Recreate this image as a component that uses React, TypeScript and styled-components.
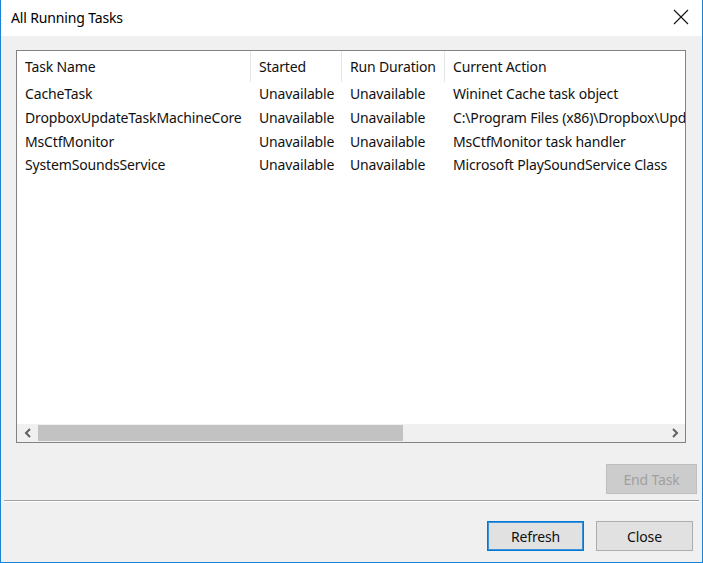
import styled, { createGlobalStyle } from "styled-components";

const Global = createGlobalStyle`
  html, body { margin: 0; padding: 0; background: #ffffff; }
  * { box-sizing: border-box; }
`

const Window = styled.div`
  width: 703px;
  height: 563px;
  display: flex;
  flex-direction: column;
  border: 1px solid #1883d7;
  border-top: none;
  font-family: "Segoe UI", "Noto Sans", sans-serif;
  font-size: 14px;
  letter-spacing: -0.15px;
  color: #111;
  background: #f0f0f0;
`
const TitleBar = styled.div`
  height: 36px;
  flex: none;
  display: flex;
  align-items: center;
  justify-content: space-between;
  background: #ffffff;
  padding: 0 13px 2px 10px;
  color: #000;
`
const CloseX = styled.div`
  width: 16px;
  height: 16px;
  display: flex;
`
const Body = styled.div`
  flex: 1;
  display: flex;
  flex-direction: column;
  padding: 14px 0 10px 15px;
`
const ListBox = styled.div`
  width: 670px;
  height: 393px;
  display: flex;
  flex-direction: column;
  border: 1px solid #828282;
  background: #ffffff;
  overflow: hidden;
`
const ListArea = styled.div`
  flex: 1;
  overflow: hidden;
`
const Grid = styled.div`
  display: grid;
  grid-template-columns: 234px 91px 103px 320px;
  width: 748px;
`
const HeadCell = styled.div<{ last?: boolean }>`
  height: 31px;
  display: flex;
  align-items: center;
  padding-left: 8px;
  border-right: ${p => (p.last ? "none" : "1px solid #e5e5e5")};
  white-space: nowrap;
`
const Cell = styled.div`
  height: 23.7px;
  display: flex;
  align-items: center;
  padding-left: 8px;
  white-space: nowrap;
  overflow: hidden;
`
const HScroll = styled.div`
  height: 18px;
  flex: none;
  display: flex;
  align-items: stretch;
  background: #f0f0f0;
`
const Arrow = styled.div`
  width: 21px;
  display: flex;
  align-items: center;
  justify-content: center;
`
const Track = styled.div`
  flex: 1;
  display: flex;
  align-items: stretch;
  padding: 1px 0;
`
const Thumb = styled.div`
  background: #c2c2c2;
`
const ActionRow = styled.div`
  display: flex;
  justify-content: flex-end;
  padding: 21px 5px 0 0;
`
const Separator = styled.div`
  height: 2px;
  margin: 6px 3px 0 -12px;
  border-top: 1px solid #a0a0a0;
  border-bottom: 1px solid #ffffff;
`
const ButtonRow = styled.div`
  display: flex;
  justify-content: flex-end;
  gap: 12px;
  padding: 19px 9px 0 0;
`
const Button = styled.div<{ variant?: "default" | "disabled" }>`
  width: ${p => (p.variant === "disabled" ? "91px" : "97px")};
  height: 30px;
  display: flex;
  align-items: center;
  justify-content: center;
  background: ${p => (p.variant === "disabled" ? "#cccccc" : "#e1e1e1")};
  border: 1px solid
    ${p =>
      p.variant === "default" ? "#0078d7" : p.variant === "disabled" ? "#bfbfbf" : "#adadad"};
  box-shadow: ${p => (p.variant === "default" ? "inset 0 0 0 1px #3c92dc" : "none")};
  color: ${p => (p.variant === "disabled" ? "#a0a0a0" : "#111")};
`

const columns = ["Task Name", "Started", "Run Duration", "Current Action"];

const tasks = [
  ["CacheTask", "Unavailable", "Unavailable", "Wininet Cache task object"],
  ["DropboxUpdateTaskMachineCore", "Unavailable", "Unavailable", "C:\\Program Files (x86)\\Dropbox\\Update\\DropboxUpdate.exe"],
  ["MsCtfMonitor", "Unavailable", "Unavailable", "MsCtfMonitor task handler"],
  ["SystemSoundsService", "Unavailable", "Unavailable", "Microsoft PlaySoundService Class"],
];

function Chevron({ dir }: { dir: "left" | "right" }) {
  const d = dir === "left" ? "M6 1 L2 5 L6 9" : "M2 1 L6 5 L2 9";
  return (
    <svg width="8" height="10" viewBox="0 0 8 10">
      <path d={d} fill="none" stroke="#606060" strokeWidth="2" />
    </svg>
  );
}

export default function App() {
  return (
    <>
      <Global />
      <Window>
        <TitleBar>
          <span>All Running Tasks</span>
          <CloseX>
            <svg width="16" height="16" viewBox="0 0 16 16">
              <path d="M1 1 L15 15 M15 1 L1 15" stroke="#111" strokeWidth="1.1" />
            </svg>
          </CloseX>
        </TitleBar>
        <Body>
          <ListBox>
            <ListArea>
              <Grid>
                {columns.map((c, i) => (
                  <HeadCell key={c} last={i === columns.length - 1}>{c}</HeadCell>
                ))}
                {tasks.map(row =>
                  row.map((v, i) => <Cell key={row[0] + i}>{v}</Cell>)
                )}
              </Grid>
            </ListArea>
            <HScroll>
              <Arrow><Chevron dir="left" /></Arrow>
              <Track>
                <Thumb style={{ width: `${(365 / 626) * 100}%` }} />
              </Track>
              <Arrow><Chevron dir="right" /></Arrow>
            </HScroll>
          </ListBox>
          <ActionRow>
            <Button variant="disabled">End Task</Button>
          </ActionRow>
          <Separator />
          <ButtonRow>
            <Button variant="default">Refresh</Button>
            <Button>Close</Button>
          </ButtonRow>
        </Body>
      </Window>
    </>
  );
}
